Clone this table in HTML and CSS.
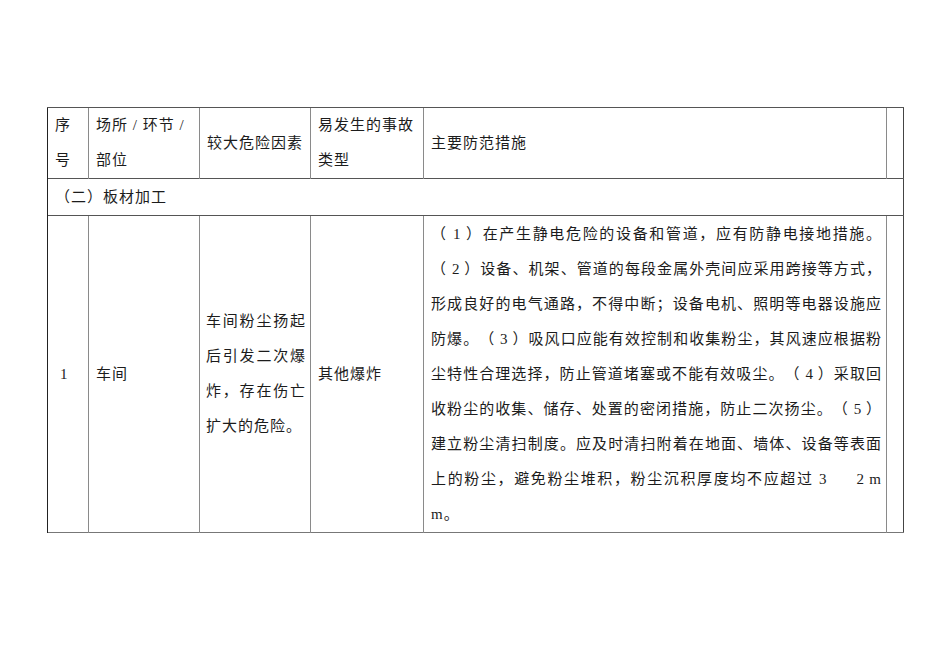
FILE: index.html
```html
<!DOCTYPE html>
<html lang="zh-CN">
<head>
<meta charset="utf-8">
<title>板材加工</title>
<link rel="stylesheet" href="styles.css">
</head>
<body>
<table class="risk">
  <colgroup>
    <col class="c1"><col class="c2"><col class="c3"><col class="c4"><col class="c5"><col class="c6">
  </colgroup>
  <tr class="head">
    <td>序<br>号</td>
    <td>场所 / 环节 /<br>部位</td>
    <td>较大危险因素</td>
    <td>易发生的事故<br>类型</td>
    <td>主要防范措施</td>
    <td></td>
  </tr>
  <tr class="section">
    <td colspan="6">（二）板材加工</td>
  </tr>
  <tr class="data">
    <td>1</td>
    <td>车间</td>
    <td class="cause">
      <div class="jl">车间粉尘扬起</div>
      <div class="jl">后引发二次爆</div>
      <div class="jl">炸，存在伤亡</div>
      <div>扩大的危险。</div>
    </td>
    <td>其他爆炸</td>
    <td class="measures">
      <div class="jl">（ 1 ）在产生静电危险的设备和管道，应有防静电接地措施。</div>
      <div class="jl">（ 2 ）设备、机架、管道的每段金属外壳间应采用跨接等方式，</div>
      <div class="jl">形成良好的电气通路，不得中断；设备电机、照明等电器设施应</div>
      <div class="jl">防爆。（ 3 ）吸风口应能有效控制和收集粉尘，其风速应根据粉</div>
      <div class="jl">尘特性合理选择，防止管道堵塞或不能有效吸尘。（ 4 ）采取回</div>
      <div class="jl">收粉尘的收集、储存、处置的密闭措施，防止二次扬尘。（ 5 ）</div>
      <div class="jl">建立粉尘清扫制度。应及时清扫附着在地面、墙体、设备等表面</div>
      <div class="jl">上的粉尘，避免粉尘堆积，粉尘沉积厚度均不应超过 3<span class="gap"></span>2 m</div>
      <div>m。</div>
    </td>
    <td></td>
  </tr>
</table>
</body>
</html>
```
FILE: styles.css
```css
html, body {
  margin: 0;
  padding: 0;
  background: #ffffff;
}
body {
  padding: 107px 0 0 47px;
  font-family: "Liberation Serif", "Noto Sans CJK SC", serif;
  color: #1c1c1c;
}
.risk {
  border-collapse: collapse;
  table-layout: fixed;
  width: 856px;
  border-top: 1px solid #111;
  border-left: 1px solid #222;
  border-right: 1px solid #444;
  border-bottom: 1px solid #777;
}
.c1 { width: 41px; }
.c2 { width: 111px; }
.c3 { width: 111px; }
.c4 { width: 113px; }
.c5 { width: 463px; }
.c6 { width: 17px; }
.risk td {
  font-size: 15px;
  letter-spacing: 1px;
  line-height: 35px;
  padding: 0 0 0 7px;
  vertical-align: middle;
  border-left: 1px solid #8a8a8a;
  border-top: 1px solid #555;
  white-space: nowrap;
  overflow: hidden;
  text-spacing-trim: space-all;
}
.risk td:first-child {
  border-left: 1px solid #222;
}
.head td { height: 70px; }
.section td { height: 36px; }
.data td { height: 316px; }
.data td:first-child { padding-left: 12px; }
.risk td.cause { padding: 0 5px 0 6px; }
.risk td.measures { padding: 0 5px 0 7px; }
.jl {
  white-space: normal;
  text-align: justify;
  text-align-last: justify;
  text-justify: inter-character;
  letter-spacing: 0;
}
.gap {
  display: inline-block;
  width: 30px;
}
```
